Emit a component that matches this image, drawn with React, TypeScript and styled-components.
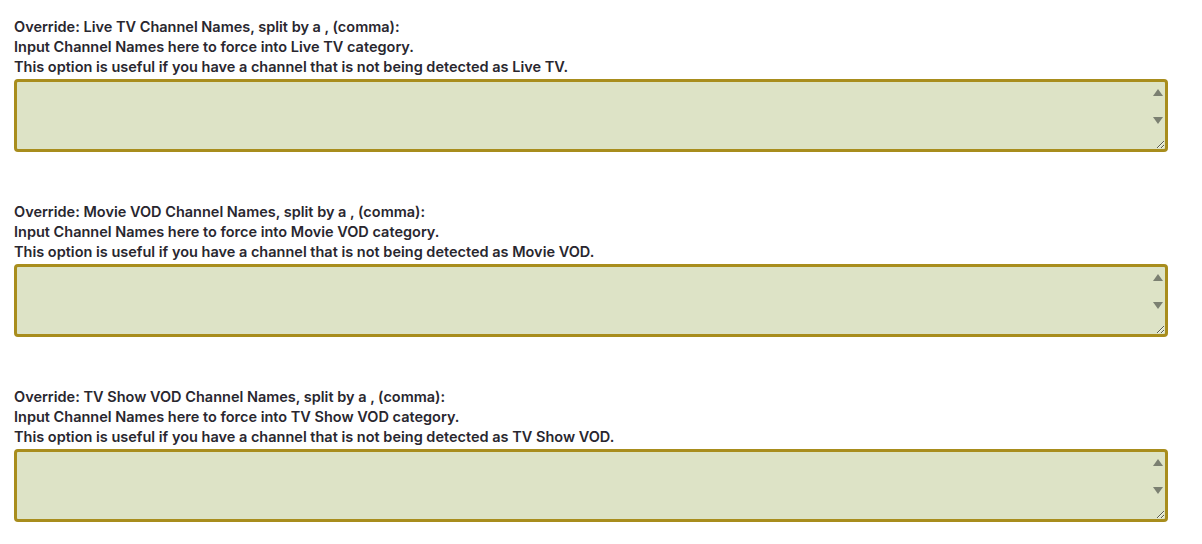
import React from "react";
import styled, { createGlobalStyle } from "styled-components";

const Global = createGlobalStyle`
  html, body { margin: 0; padding: 0; background: #ffffff; }
  body { font-family: "Inter", sans-serif; }
`;

const Page = styled.div`
  padding: 17px 34px 0 14px;
  display: flex;
  flex-direction: column;
  gap: 50px;
`;

const Field = styled.div`
  display: flex;
  flex-direction: column;
  gap: 2px;
`;

const Label = styled.label`
  font-family: "Inter", sans-serif;
  font-size: 14.5px;
  font-weight: 600;
  line-height: 20px;
  color: #29272f;
  display: block;
  white-space: nowrap;
`;

const AreaWrap = styled.div`
  position: relative;
`;

const Area = styled.textarea`
  box-sizing: border-box;
  width: 100%;
  height: 73px;
  margin: 0;
  border: 3px solid #a88d1d;
  border-radius: 4px;
  background: #dde3c6;
  resize: vertical;
  outline: none;
  font-family: "Inter", sans-serif;
  font-size: 13px;
  display: block;
`;

const Arrow = styled.span<{ $down?: boolean }>`
  position: absolute;
  right: 5px;
  width: 0;
  height: 0;
  border-left: 5px solid transparent;
  border-right: 5px solid transparent;
  ${(p) =>
    p.$down
      ? `top: 38px; border-top: 7px solid #7b8071;`
      : `top: 10px; border-bottom: 7px solid #7b8071;`}
  pointer-events: none;
`;

const fields = [
  ["Live TV", "Live TV"],
  ["Movie VOD", "Movie VOD"],
  ["TV Show VOD", "TV Show VOD"],
];

export default function App() {
  return (
    <>
      <Global />
      <Page>
        {fields.map(([name, cat]) => (
          <Field key={name}>
            <Label>
              Override: {name} Channel Names, split by a , (comma):
              <br />
              Input Channel Names here to force into {cat} category.
              <br />
              This option is useful if you have a channel that is not being detected as {cat}.
            </Label>
            <AreaWrap>
              <Area />
              <Arrow />
              <Arrow $down />
            </AreaWrap>
          </Field>
        ))}
      </Page>
    </>
  );
}
